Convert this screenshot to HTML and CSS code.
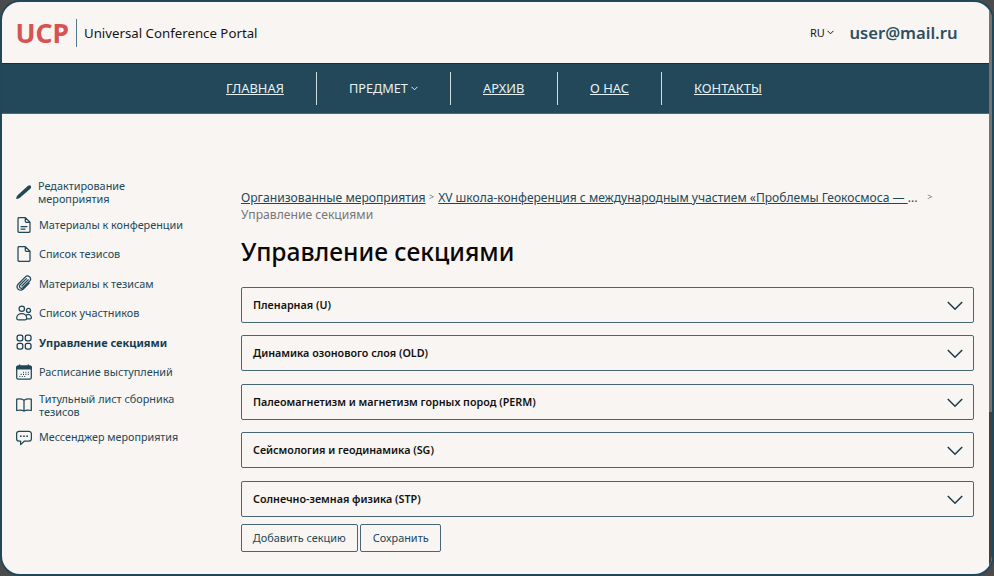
FILE: index.html
```html
<!DOCTYPE html>
<html lang="ru">
<head>
<meta charset="utf-8">
<title>Управление секциями</title>
<link rel="stylesheet" href="styles.css">
</head>
<body>
<div class="window">
  <div class="page">
    <header class="header">
      <div class="logo">UCP</div>
      <div class="brand">Universal Conference Portal</div>
      <div class="lang">RU<svg width="7" height="5" viewBox="0 0 7 5"><path d="M.5 .8 3.5 3.8 6.5 .8"/></svg></div>
      <div class="user">user@mail.ru</div>
    </header>
    <nav class="nav">
      <a class="tab home">ГЛАВНАЯ</a>
      <a class="tab subject"><span>ПРЕДМЕТ</span><svg width="7" height="5" viewBox="0 0 7 5"><path d="M.5 .8 3.5 3.8 6.5 .8"/></svg></a>
      <a class="tab archive">АРХИВ</a>
      <a class="tab about">О НАС</a>
      <a class="tab contacts">КОНТАКТЫ</a>
    </nav>
    <div class="body">
      <aside class="side">
        <a class="item first"><svg viewBox="0 0 16 16"><path class="fill" d="M.2 14.6Q.4 12.4 1.6 11.3L12 1.8Q13.4.6 14.7 1.8 15.8 3.1 14.6 4.4L4.2 13.6Q2.8 14.7.8 15 .2 15.1.2 14.6Z"/></svg><span>Редактирование<br>мероприятия</span></a>
        <a class="item"><svg viewBox="0 0 16 16"><path d="M2 1.7Q2 .6 3.1.6H9.3L14 5.3V14.3Q14 15.4 12.9 15.4H3.1Q2 15.4 2 14.3ZM9.3.6V4.2Q9.3 5.3 10.4 5.3H14M5 9.5H11M5 12H9"/></svg><span>Материалы к конференции</span></a>
        <a class="item"><svg viewBox="0 0 16 16"><path d="M2 1.7Q2 .6 3.1.6H9.3L14 5.3V14.3Q14 15.4 12.9 15.4H3.1Q2 15.4 2 14.3ZM9.3.6V4.2Q9.3 5.3 10.4 5.3H14"/></svg><span>Список тезисов</span></a>
        <a class="item"><svg viewBox="0 0 16 16"><path d="M13.2 8.1 7.3 14Q4.8 16.3 2.2 14.2-.1 11.7 2.1 9.2L9.4 1.9Q11.3.1 13.5 1.7 15.6 3.7 13.8 5.9L6.9 12.7Q5.4 13.9 4.1 12.7 2.8 11.3 4 10L10.4 3.6M6 11 12.2 4.8"/></svg><span>Материалы к тезисам</span></a>
        <a class="item"><svg viewBox="0 0 16 16"><circle cx="5.8" cy="3.7" r="2.7"/><circle cx="12.5" cy="5.4" r="2"/><path d="M.7 13.3C.7 7 10.7 7 10.7 13.3Q10.7 14.8 9.2 14.8H2.2Q.7 14.8.7 13.3ZM10.6 9.8C13.2 8.8 15.4 10.5 15.4 12.6Q15.4 13.8 14.2 13.8H11"/></svg><span>Список участников</span></a>
        <a class="item current"><svg viewBox="0 0 16 16"><rect x="1.1" y="1.1" width="5.7" height="5.7" rx="2"/><rect x="9.3" y="1.1" width="5.7" height="5.7" rx="2"/><rect x="1.1" y="9.3" width="5.7" height="5.7" rx="2"/><rect x="9.3" y="9.3" width="5.7" height="5.7" rx="2"/></svg><span>Управление секциями</span></a>
        <a class="item"><svg viewBox="0 0 16 16"><rect x=".7" y="2.2" width="14.6" height="13" rx="1.6"/><path class="fill" d="M.2 5.4V3Q.2 1.5 1.7 1.5H3V.4H4.3V1.5H11.7V.4H13V1.5H14.3Q15.8 1.5 15.8 3V5.4Z"/><path class="days" d="M7 8.3H8M9.4 8.3H10.4M11.8 8.3H12.8M4.6 10.4H5.6M7 10.4H8M9.4 10.4H10.4M11.8 10.4H12.8M3.4 12.5H4.4M5.8 12.5H6.8M8.2 12.5H9.2"/></svg><span>Расписание выступлений</span></a>
        <a class="item"><svg viewBox="0 0 16 16"><path d="M8 3.3Q5 1.3.7 2.2V13.5Q5 12.3 8 14 11 12.3 15.3 13.5V2.2Q11 1.3 8 3.3V14"/></svg><span>Титульный лист сборника<br>тезисов</span></a>
        <a class="item last"><svg viewBox="0 0 16 16"><path d="M3 1.3H13Q15.4 1.3 15.4 3.7V8.8Q15.4 11.2 13 11.2H8.2L4.6 14.6V11.2H3Q.6 11.2.6 8.8V3.7Q.6 1.3 3 1.3Z"/><path class="dots" d="M4.8 6.2H4.9M7.95 6.2H8.05M11.1 6.2H11.2"/></svg><span>Мессенджер мероприятия</span></a>
      </aside>
      <main class="main">
        <div class="crumbs">
          <div class="trail"><a class="org">Организованные мероприятия</a><i>&gt;</i><span class="conf"><a>XV школа-конференция с международным участием «Проблемы Геокосмоса —&nbsp;</a>...</span><i class="end">&gt;</i></div>
          <div class="here">Управление секциями</div>
        </div>
        <h1>Управление секциями</h1>
        <div class="sections">
          <div class="section"><span>Пленарная (U)</span><svg width="16" height="10" viewBox="0 0 16 10"><path d="M.8 1 8 8.3 15.2 1"/></svg></div>
          <div class="section"><span>Динамика озонового слоя (OLD)</span><svg width="16" height="10" viewBox="0 0 16 10"><path d="M.8 1 8 8.3 15.2 1"/></svg></div>
          <div class="section"><span>Палеомагнетизм и магнетизм горных пород (PERM)</span><svg width="16" height="10" viewBox="0 0 16 10"><path d="M.8 1 8 8.3 15.2 1"/></svg></div>
          <div class="section"><span>Сейсмология и геодинамика (SG)</span><svg width="16" height="10" viewBox="0 0 16 10"><path d="M.8 1 8 8.3 15.2 1"/></svg></div>
          <div class="section"><span>Солнечно-земная физика (STP)</span><svg width="16" height="10" viewBox="0 0 16 10"><path d="M.8 1 8 8.3 15.2 1"/></svg></div>
        </div>
        <div class="actions"><button class="add">Добавить секцию</button><button class="save">Сохранить</button></div>
      </main>
    </div>
  </div>
  <div class="scroll"><div class="thumb"></div></div>
</div>
</body>
</html>
```
FILE: styles.css
```css
* { box-sizing: border-box; }
body { margin: 0; background: #4b4b4c; font-family: "Noto Sans", "Open Sans", sans-serif; color: #214859; }
svg { fill: none; stroke: currentColor; flex: none; }
.window { width: 994px; height: 576px; border: 2px solid #20485a; border-radius: 20px; overflow: hidden; display: flex; background: #f9f5f2; }
.page { width: 987px; }
.scroll { width: 3px; background: #414141; }
.thumb { height: 410px; background: #737373; }
.header { height: 61px; display: flex; align-items: center; padding-left: 13.5px; }
.logo { width: 61.5px; height: 28px; border-right: 1px solid #55798a; color: #d65352; font-weight: 700; font-size: 26.5px; line-height: 29px; }
.brand { margin-left: 7px; width: 726px; color: #151515; font-size: 13.25px; }
.lang { width: 39.5px; color: #151515; font-size: 11px; display: flex; align-items: center; gap: 2px; }
.user { font-size: 16.6px; font-weight: 600; color: #2c5060; white-space: nowrap; }
.nav { height: 51px; background: #224859; color: #e5f2f5; display: flex; align-items: center; padding: 0 0 1px 192px; font-size: 12.9px; border-bottom: 1px solid #4b6976; border-top: 1px solid #0d3143; }
.tab { height: 33px; display: flex; align-items: center; padding-left: 32px; border-right: 1px solid #d0dce0; text-decoration: underline; white-space: nowrap; }
.home { width: 123px; }
.subject { width: 134px; text-decoration: none; gap: 3px; font-size: 12.7px; }
.archive { width: 107px; }
.about { width: 104px; }
.contacts { border: 0; }
.body { display: flex; }
.side { width: 239px; padding: 64.6px 0 0 14px; display: flex; flex-direction: column; gap: 10.6px; font-size: 10.85px; line-height: 13px; }
.item { min-height: 18.8px; display: flex; align-items: center; gap: 7px; white-space: nowrap; }
.item svg { width: 16px; height: 16px; stroke-width: 1.25; stroke-linecap: round; stroke-linejoin: round; }
.item .fill { fill: currentColor; stroke: none; }
.item .dots { stroke-width: 1.7; }
.item .days { stroke-width: 1.1; stroke-linecap: butt; }
.first { gap: 6px; }
.last { font-size: 10.75px; }
.current { font-weight: 700; font-size: 11px; color: #163d50; }
.main { width: 732px; padding-top: 75px; }
.crumbs { font-size: 12.15px; line-height: 17px; white-space: nowrap; color: #777; }
.trail { display: flex; }
.trail a { color: #214859; text-decoration: underline; }
.trail i { font-style: normal; font-size: 9px; margin: 0 4px; line-height: 16px; }
.org { width: 184px; }
.conf { width: 480px; color: #214859; font-size: 12.05px; }
.trail .end { margin-left: 9px; }
h1 { margin: 13px 0 0; font-size: 24.6px; line-height: 31px; font-weight: 500; color: #080808; }
.sections { display: flex; flex-direction: column; gap: 12.4px; margin-top: 20px; width: 733px; }
.section { height: 36px; border: 1px solid #486775; border-radius: 2px; display: flex; align-items: center; justify-content: space-between; padding: 0 10px 0 11px; font-size: 10.75px; font-weight: 600; color: #111; }
.section svg { stroke: #183b4c; stroke-width: 1.5; margin-top: 2px; }
.actions { display: flex; gap: 2.6px; margin-top: 7px; }
button { height: 28px; padding: 0; border: 1px solid #486775; border-radius: 2px; background: none; color: #214859; font: 10.9px "Noto Sans", sans-serif; }
.add { width: 116.6px; }
.save { width: 81px; }
```
